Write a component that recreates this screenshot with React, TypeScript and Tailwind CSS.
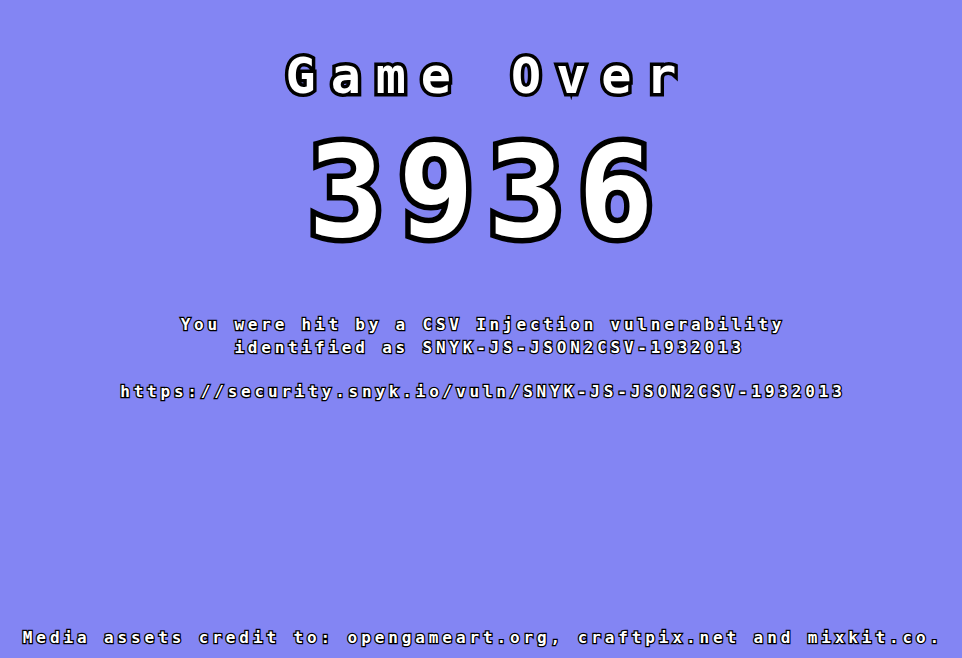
import React from "react";

const mono = { fontFamily: '"DejaVu Sans Mono", "Liberation Mono", monospace' };

export default function App() {
  return (
    <div
      className="w-[962px] h-[658px] bg-[#8385f3] flex flex-col items-center text-white overflow-hidden"
      style={mono}
    >
      <div className="mt-[51px] text-[50px] leading-none font-bold tracking-[15px] pl-[15px] [-webkit-text-stroke:7px_black] [paint-order:stroke_fill]">
        Game Over
      </div>
      <div className="mt-[29px] text-[126px] leading-none font-bold tracking-[14px] pl-[14px] [-webkit-text-stroke:11px_black] [paint-order:stroke_fill]">
        3936
      </div>
      <div className="mt-[57px] text-[16px] leading-[23px] font-bold text-center tracking-[3.8px] pl-[3.8px] [-webkit-text-stroke:2.5px_black] [paint-order:stroke_fill]">
        <div>You were hit by a CSV Injection vulnerability</div>
        <div>{"\u00a0identified as SNYK-JS-JSON2CSV-1932013"}</div>
      </div>
      <div className="mt-[21px] text-[16px] leading-[23px] font-bold tracking-[3.8px] pl-[3.8px] [-webkit-text-stroke:2.5px_black] [paint-order:stroke_fill]">
        https://security.snyk.io/vuln/SNYK-JS-JSON2CSV-1932013
      </div>
      <div className="mt-auto mb-[9px] text-[16px] leading-[23px] font-bold tracking-[3.9px] pl-[3.9px] [-webkit-text-stroke:2.5px_black] [paint-order:stroke_fill]">
        Media assets credit to: opengameart.org, craftpix.net and mixkit.co.
      </div>
    </div>
  );
}
